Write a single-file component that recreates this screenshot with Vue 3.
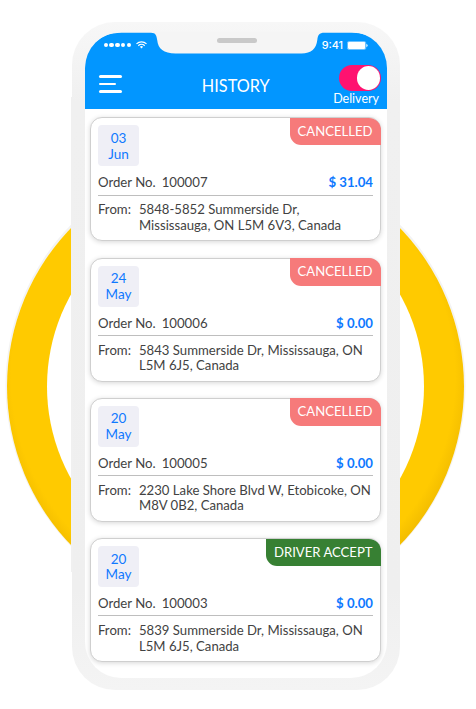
<script setup>
import { ref } from "vue"

const delivery = ref(true)

const orders = ref([
  { day: "03", month: "Jun", no: "100007", price: "31.04", status: "CANCELLED", from: ["5848-5852 Summerside Dr,", "Mississauga, ON L5M 6V3, Canada"] },
  { day: "24", month: "May", no: "100006", price: "0.00", status: "CANCELLED", from: ["5843 Summerside Dr, Mississauga, ON", "L5M 6J5, Canada"] },
  { day: "20", month: "May", no: "100005", price: "0.00", status: "CANCELLED", from: ["2230 Lake Shore Blvd W, Etobicoke, ON", "M8V 0B2, Canada"] },
  { day: "20", month: "May", no: "100003", price: "0.00", status: "DRIVER ACCEPT", from: ["5839 Summerside Dr, Mississauga, ON", "L5M 6J5, Canada"] },
])
</script>

<template>
  <div class="page">
    <div class="ring"></div>
    <div class="phone">
      <span class="side left"></span>
      <span class="side right"></span>
      <span class="speaker"></span>
      <div class="screen">
        <header class="header">
          <!-- blue area with the notch cut out -->
          <svg class="header-bg" viewBox="84.5 32 302.5 77" preserveAspectRatio="none">
            <path fill="#0296ff" d="M84.5 109V68C84.5 48 98 32.7 121 32.7H150.5C155.2 32.7 156 35.5 156.700 40C157.700 49 163 53.4 175 53.4H301C311 53.4 315.8 48.5 316.8 40C317.4 34.8 318.5 32.7 324 32.7H352C374 32.7 387 48 387 68V109Z" />
          </svg>
          <div class="status-bar">
            <div class="signal">
              <i v-for="n in 5" :key="n"></i>
              <svg class="wifi" viewBox="0 0 11 8" width="11" height="8" fill="none" stroke="#fff" stroke-width="1.25">
                <path d="M.5 2.9C3.3.1 7.7.1 10.5 2.9" />
                <path d="M2.3 4.7C4.1 3 6.9 3 8.7 4.7" />
                <path d="M3.9 5.7Q5.5 4.5 7.1 5.7L5.5 7.6Z" fill="#fff" stroke="none" />
              </svg>
            </div>
            <div class="clock">
              <span>9:41</span>
              <svg width="21" height="9" viewBox="0 0 21 9">
                <rect x=".4" y=".5" width="18.4" height="8" rx="1.5" fill="none" stroke="#fff" stroke-width=".6" stroke-opacity=".7" />
                <rect x="1" y="1.1" width="17.2" height="6.8" rx=".8" fill="#fff" />
                <path d="M19.4 3q1.2 .2 1.2 1.5t-1.2 1.5z" fill="#fff" />
              </svg>
            </div>
          </div>
          <div class="nav">
            <div class="menu"><i></i><i class="short"></i><i></i></div>
            <h1>HISTORY</h1>
            <div class="delivery">
              <div class="switch" :class="{ on: delivery }" @click="delivery = !delivery"><b></b></div>
              <span>Delivery</span>
            </div>
          </div>
        </header>
        <main class="list">
          <article v-for="order in orders" :key="order.no" class="card">
            <div class="top">
              <div class="date">
                <span>{{ order.day }}</span>
                <span>{{ order.month }}</span>
              </div>
              <div class="tag" :class="{ accept: order.status === 'DRIVER ACCEPT' }">{{ order.status }}</div>
            </div>
            <div class="order">
              <span>Order No.</span>
              <span class="number">{{ order.no }}</span>
              <strong>$ {{ order.price }}</strong>
            </div>
            <div class="from">
              <span>From:</span>
              <p><span v-for="line in order.from" :key="line">{{ line }}</span></p>
            </div>
          </article>
        </main>
      </div>
    </div>
  </div>
</template>

<style>
body {
  background: #fff;
}
</style>

<style scoped>
.page {
  position: relative;
  box-sizing: border-box;
  width: 476px;
  height: 709px;
  padding: 22px 0 0 72px;
  overflow: hidden;
  font-family: Lato, "Liberation Sans", sans-serif;
  color: #424242;
}
.ring {
  position: absolute;
  left: 7px;
  top: 157.5px;
  box-sizing: border-box;
  width: 457px;
  height: 457px;
  border-radius: 50%;
  background: radial-gradient(circle at 49.5% 48%, #ffca00 222px, #f0ba00 240px);
  box-shadow: 0 -1px 0 1.5px #f3f3f3;
}
.ring::after {
  content: "";
  position: absolute;
  inset: 40px;
  border-radius: 50%;
  background: #fff;
}
.phone {
  position: relative;
  box-sizing: border-box;
  width: 327.5px;
  height: 668px;
  padding: 10px 12.5px 12px;
  border-radius: 43px;
  background: linear-gradient(#f7f7f7, #f0f0f0 12%, #efefef 85%, #f4f4f4);
}
.side {
  position: absolute;
  width: 2px;
  background: #f0f0f0;
}
.side.left {
  left: -1px;
  top: 75px;
  height: 475px;
}
.side.right {
  right: -.5px;
  top: 139px;
  height: 110px;
}
.speaker {
  position: absolute;
  z-index: 2;
  left: 145px;
  top: 16px;
  width: 40px;
  height: 5px;
  border-radius: 3px;
  background: #c9c9c9;
}
.screen {
  height: 646px;
  border-radius: 36px;
  background: linear-gradient(#f5f5f5 40px, #fff 40px);
  overflow: hidden;
}
.header {
  position: relative;
  height: 77px;
  color: #fff;
}
.header-bg {
  position: absolute;
  width: 100%;
  height: 100%;
}
.status-bar {
  position: relative;
  display: flex;
  justify-content: space-between;
  align-items: center;
  height: 26px;
  padding: 0 19px 0 19px;
}
.signal {
  display: flex;
  align-items: center;
  gap: 1.2px;
}
.signal i {
  width: 4.6px;
  height: 4.6px;
  border-radius: 50%;
  background: #fff;
}
.wifi {
  margin-left: 3.5px;
}
.clock {
  display: flex;
  align-items: center;
  gap: 4px;
  font: 500 10.8px Inter, sans-serif;
}
.nav {
  position: relative;
  display: grid;
  grid-template-columns: 60px 1fr 60px;
  height: 51px;
}
.menu {
  display: flex;
  flex-direction: column;
  gap: 5px;
  padding: 17px 0 0 14.5px;
}
.menu i {
  width: 23px;
  height: 2.5px;
  border-radius: 2px;
  background: #fff;
}
.menu .short {
  width: 16.5px;
}
h1 {
  margin: 18px 0 0;
  font-size: 16.3px;
  line-height: 20px;
  font-weight: 400;
  text-align: center;
}
.delivery {
  display: flex;
  flex-direction: column;
  align-items: flex-end;
  padding: 7px 6px 0 0;
  font-size: 12.5px;
  line-height: 15px;
}
.delivery span {
  margin-right: 2px;
}
.switch {
  box-sizing: border-box;
  width: 42px;
  height: 26px;
  padding: 1px;
  border-radius: 13px;
  background: #b5b5b5;
}
.switch.on {
  background: #ff1270;
}
.switch b {
  display: block;
  width: 23.5px;
  height: 24px;
  border-radius: 50%;
  background: #fff;
}
.switch.on b {
  margin-left: auto;
}
.list {
  display: flex;
  flex-direction: column;
  gap: 16.3px;
  padding: 8.3px 6px 0 5px;
}
.card {
  box-sizing: border-box;
  height: 124px;
  padding-left: 7.5px;
  border: 1px solid #cfcfcf;
  border-radius: 12px;
  background: #fff;
  box-shadow: 0 1px 5px rgba(0, 0, 0, .16);
}
.top {
  display: flex;
  justify-content: space-between;
  align-items: flex-start;
  height: 48px;
}
.date {
  display: flex;
  flex-direction: column;
  align-items: center;
  box-sizing: border-box;
  width: 41px;
  height: 41px;
  margin-top: 7px;
  padding-top: 5.5px;
  border-radius: 4px;
  background: #efeff6;
  color: #0f79ff;
  font-size: 13.5px;
  line-height: 15.7px;
}
.tag {
  box-sizing: border-box;
  height: 27.5px;
  margin: -.5px -1px 0 0;
  padding: 0 8.5px 0 8px;
  border-radius: 0 12px 0 11px;
  background: #f67a7a;
  color: #fff;
  font-size: 13.1px;
  line-height: 27.5px;
}
.tag.accept {
  background: #378033;
}
.order {
  display: flex;
  height: 29.3px;
  margin-right: 7px;
  border-bottom: 1px solid #bebebe;
  box-sizing: border-box;
  font-size: 13.2px;
  line-height: 32.5px;
}
.number {
  margin-left: 6px;
}
.order strong {
  margin-left: auto;
  color: #0f79ff;
}
.from {
  display: grid;
  grid-template-columns: 41px 1fr;
  padding-top: 6.7px;
  font-size: 13.15px;
  line-height: 15.5px;
  white-space: nowrap;
}
.from p {
  margin: 0;
}
.from p span {
  display: block;
}
</style>
